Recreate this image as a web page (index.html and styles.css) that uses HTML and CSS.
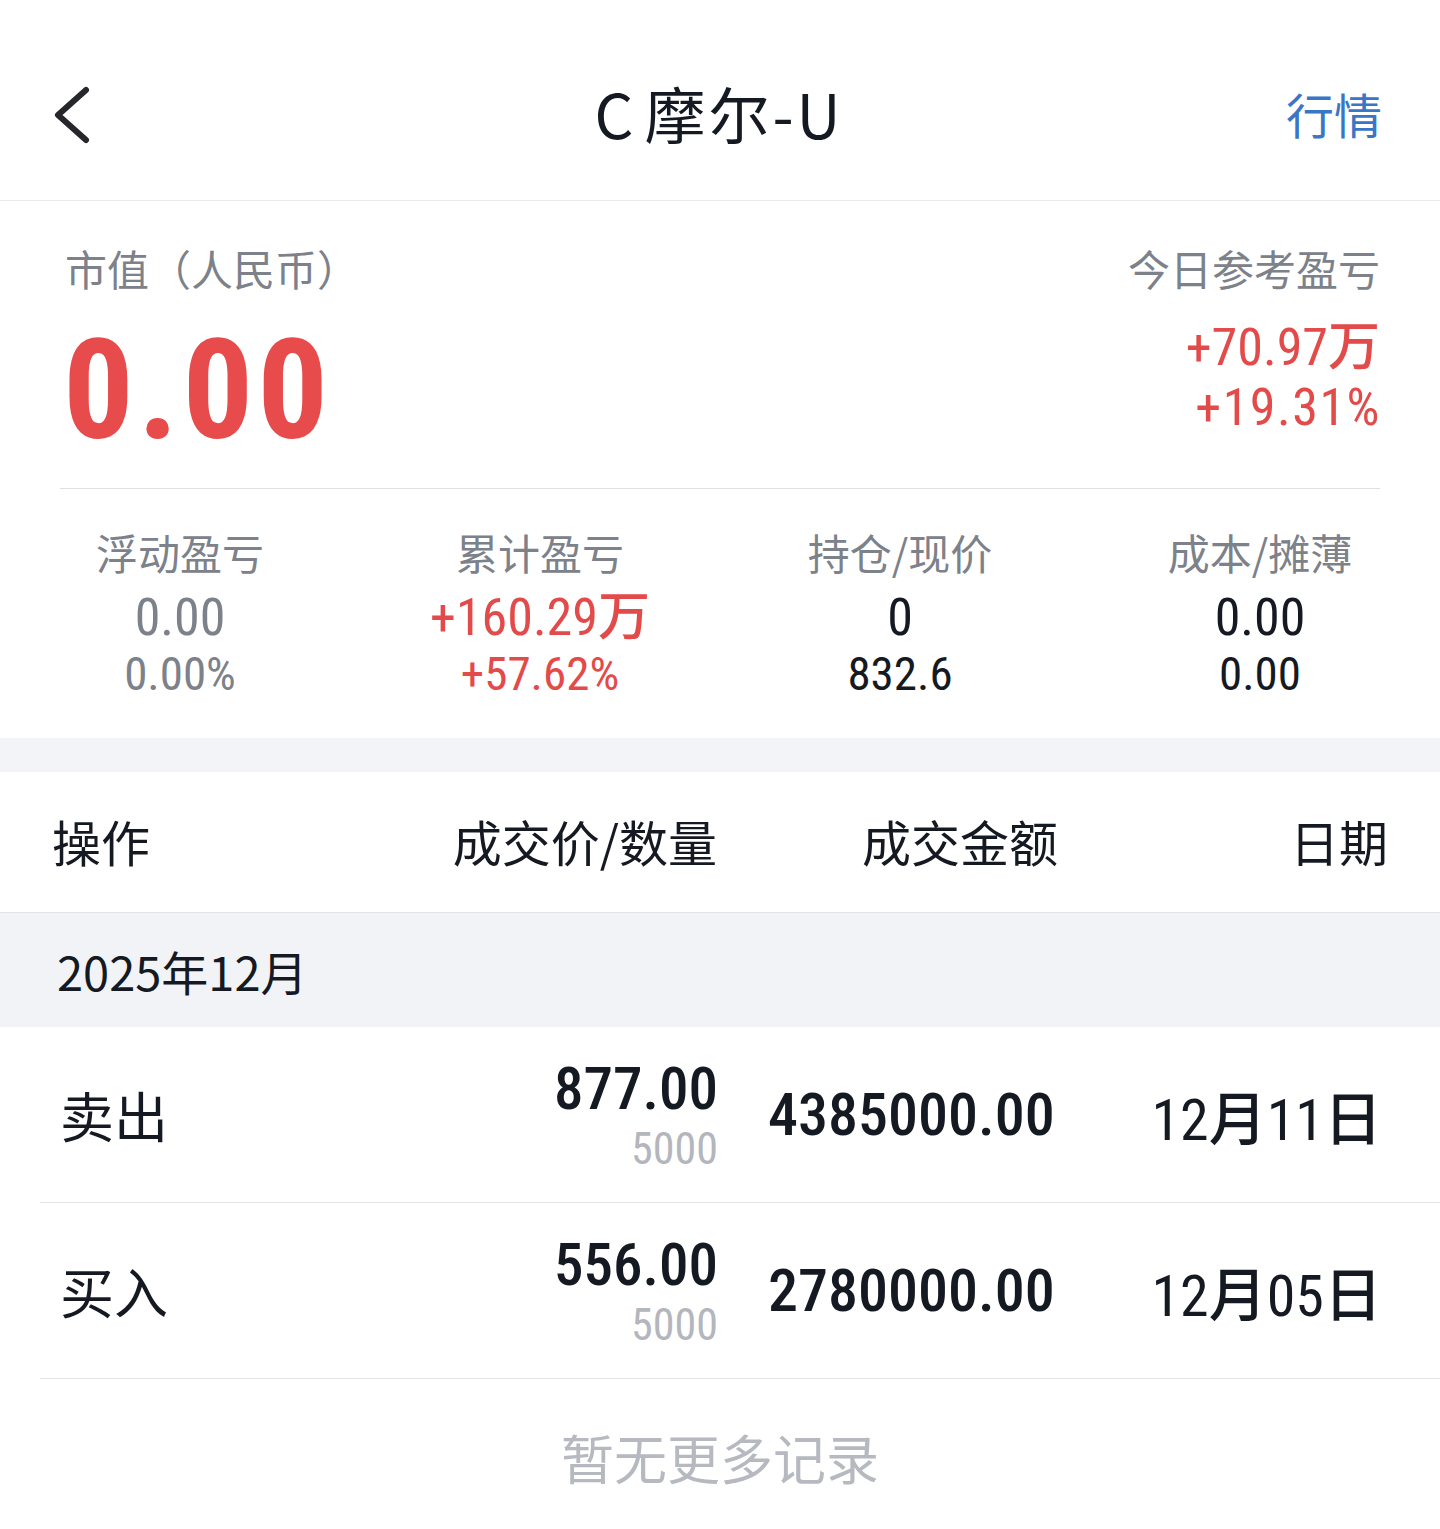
FILE: index.html
```html
<!DOCTYPE html>
<html lang="zh-CN">
<head>
<meta charset="utf-8">
<title>C摩尔-U</title>
<link rel="stylesheet" href="styles.css">
</head>
<body>
<div class="page">
  <header class="topbar">
    <div class="back">
      <svg width="40" height="60" viewBox="0 0 40 60"><polyline points="34,5 6,30 34,55" fill="none" stroke="#25272b" stroke-width="6" stroke-linecap="round" stroke-linejoin="round"/></svg>
    </div>
    <div class="title"><span class="title-c">C</span>摩尔-U</div>
    <div class="quote">行情</div>
  </header>

  <section class="summary">
    <div class="sum-left">
      <div class="label">市值（人民币）</div>
      <div class="big num">0.00</div>
    </div>
    <div class="sum-right">
      <div class="label">今日参考盈亏</div>
      <div class="today num red">+70.97万</div>
      <div class="today-pct num red">+19.31%</div>
    </div>
  </section>
  <div class="divider"></div>

  <section class="stats">
    <div class="stat">
      <div class="stat-label">浮动盈亏</div>
      <div class="stat-val num gray">0.00</div>
      <div class="stat-sub num gray">0.00%</div>
    </div>
    <div class="stat">
      <div class="stat-label">累计盈亏</div>
      <div class="stat-val num red">+160.29万</div>
      <div class="stat-sub num red">+57.62%</div>
    </div>
    <div class="stat">
      <div class="stat-label">持仓/现价</div>
      <div class="stat-val num">0</div>
      <div class="stat-sub num">832.6</div>
    </div>
    <div class="stat">
      <div class="stat-label">成本/摊薄</div>
      <div class="stat-val num">0.00</div>
      <div class="stat-sub num">0.00</div>
    </div>
  </section>

  <div class="band"></div>

  <div class="thead">
    <div class="c-op">操作</div>
    <div class="c-price">成交价/数量</div>
    <div class="c-amt">成交金额</div>
    <div class="c-date">日期</div>
  </div>

  <div class="month">2025年12月</div>

  <div class="row">
    <div class="c-op op">卖出</div>
    <div class="c-price">
      <div class="price num">877.00</div>
      <div class="qty num">5000</div>
    </div>
    <div class="c-amt amt num">4385000.00</div>
    <div class="c-date date num">12月11日</div>
  </div>
  <div class="row">
    <div class="c-op op">买入</div>
    <div class="c-price">
      <div class="price num">556.00</div>
      <div class="qty num">5000</div>
    </div>
    <div class="c-amt amt num">2780000.00</div>
    <div class="c-date date num">12月05日</div>
  </div>

  <div class="nomore">暂无更多记录</div>
</div>
</body>
</html>
```

FILE: styles.css
```css
* { box-sizing: border-box; }
html, body { margin: 0; padding: 0; background: #ffffff; }
body {
  font-family: "Noto Sans CJK SC", "Noto Sans", sans-serif;
  color: #151922;
}
.page { width: 1440px; }

.num {
  font-family: "Roboto", "Noto Sans CJK SC", sans-serif;
  font-stretch: 87.5%;
}
.red { color: #e34a4a; }
.gray { color: #7c818a; }

/* header */
.topbar {
  height: 201px;
  padding: 26px 60px 0 52px;
  display: grid;
  grid-template-columns: 1fr auto 1fr;
  align-items: center;
  border-bottom: 1px solid #e8e9ec;
}
.back { display: flex; align-items: center; padding-top: 4px; }
.back svg { display: block; }
.title {
  font-size: 61px;
  line-height: 70px;
  color: #151922;
  letter-spacing: 3px;
  margin-left: 6px;
}
.title-c { margin-right: 8px; }
.quote {
  justify-self: end;
  font-size: 48px;
  line-height: 60px;
  color: #3a76c6;
  margin-right: -2px;
}

/* summary */
.summary {
  display: flex;
  justify-content: space-between;
  padding: 42px 60px 0 65px;
  height: 287px;
}
.label {
  font-size: 42px;
  line-height: 50px;
  color: #7c818a;
}
.big {
  font-size: 140px;
  line-height: 140px;
  font-weight: 700;
  letter-spacing: 4px;
  color: #e84b4b;
  margin-top: 27px;
  margin-left: -2px;
}
.sum-right { text-align: right; }
.today {
  font-size: 52px;
  line-height: 58px;
  font-weight: 450;
  margin-top: 26px;
}
.today-pct {
  font-size: 52px;
  line-height: 58px;
  font-weight: 450;
  letter-spacing: 1.5px;
  margin-top: 2px;
  margin-right: -1px;
}
.divider {
  height: 1px;
  background: #dfe0e3;
  margin: 0 60px;
}

/* stats */
.stats {
  display: grid;
  grid-template-columns: repeat(4, 1fr);
  padding-top: 38px;
  height: 249px;
}
.stat { text-align: center; }
.stat-label {
  font-size: 42px;
  line-height: 50px;
  color: #7c818a;
}
.stat-val {
  font-size: 52px;
  line-height: 58px;
  font-weight: 450;
  margin-top: 12px;
}
.stat-sub {
  font-size: 47px;
  line-height: 50px;
  margin-top: 2px;
}

.band {
  height: 34px;
  background: #f3f4f8;
}

/* table */
.thead {
  display: grid;
  grid-template-columns: 270px 395px auto 1fr;
  height: 141px;
  align-items: center;
  padding: 0 52px 4px 52px;
  font-size: 49px;
  color: #151922;
  border-bottom: 1px solid #e3e4e8;
}
.c-price { text-align: right; }
.c-date { text-align: right; }
.thead .c-amt { padding-left: 145px; white-space: nowrap; }

.month {
  height: 114px;
  background: #f2f3f7;
  padding-left: 57px;
  display: flex;
  align-items: center;
  font-size: 47px;
  color: #151922;
}

.row {
  display: grid;
  grid-template-columns: 250px 408px 300px 1fr;
  height: 176px;
  align-items: center;
  margin-left: 40px;
  padding: 0 58px 0 20px;
  border-bottom: 1px solid #e3e4e8;
}
.row .c-amt { padding-left: 50px; white-space: nowrap; }
.op {
  font-size: 54px;
  line-height: 64px;
}
.price {
  font-size: 59px;
  line-height: 62px;
  font-weight: 500;
}
.qty {
  font-size: 44px;
  line-height: 46px;
  font-weight: 450;
  color: #b3b6bd;
  margin-top: 6px;
}
.amt {
  font-size: 60px;
  font-weight: 500;
}
.date {
  font-size: 58px;
  font-weight: 450;
}

.nomore {
  text-align: center;
  font-size: 53px;
  color: #b6b9bf;
  padding-top: 40px;
}
```
